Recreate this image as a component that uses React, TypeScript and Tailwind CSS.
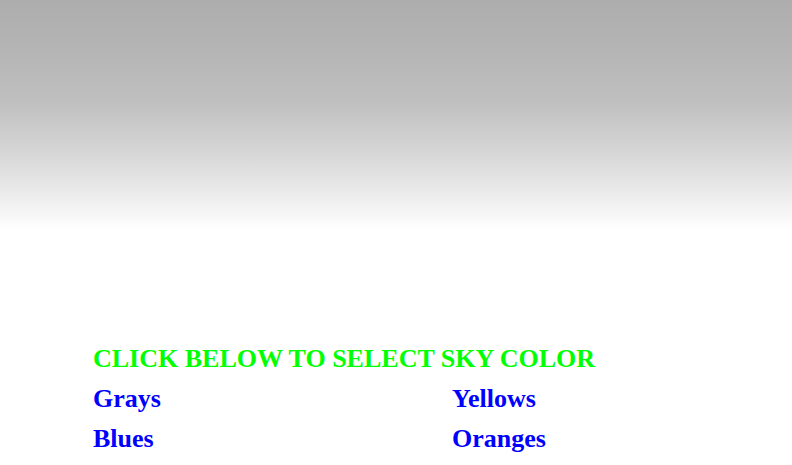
const App = () => {
  return (
    <div className="min-h-[465px] bg-white font-['Liberation_Serif',serif] font-bold">
      <div className="h-[230px] bg-[linear-gradient(to_bottom,#adadad_0%,#b4b4b4_20%,#c0c0c0_45%,#d8d8d8_68%,#f0f0f0_88%,#ffffff_100%)]" />
      <div className="pl-[93px] pt-[109px] text-[26px] leading-[40px]">
        <div className="text-[#00ff00]">CLICK BELOW TO SELECT SKY COLOR</div>
        <div className="grid grid-cols-[359px_auto] text-[#0000ff]">
          <span>Grays</span>
          <span>Yellows</span>
          <span>Blues</span>
          <span>Oranges</span>
        </div>
      </div>
    </div>
  );
};

export default App;
